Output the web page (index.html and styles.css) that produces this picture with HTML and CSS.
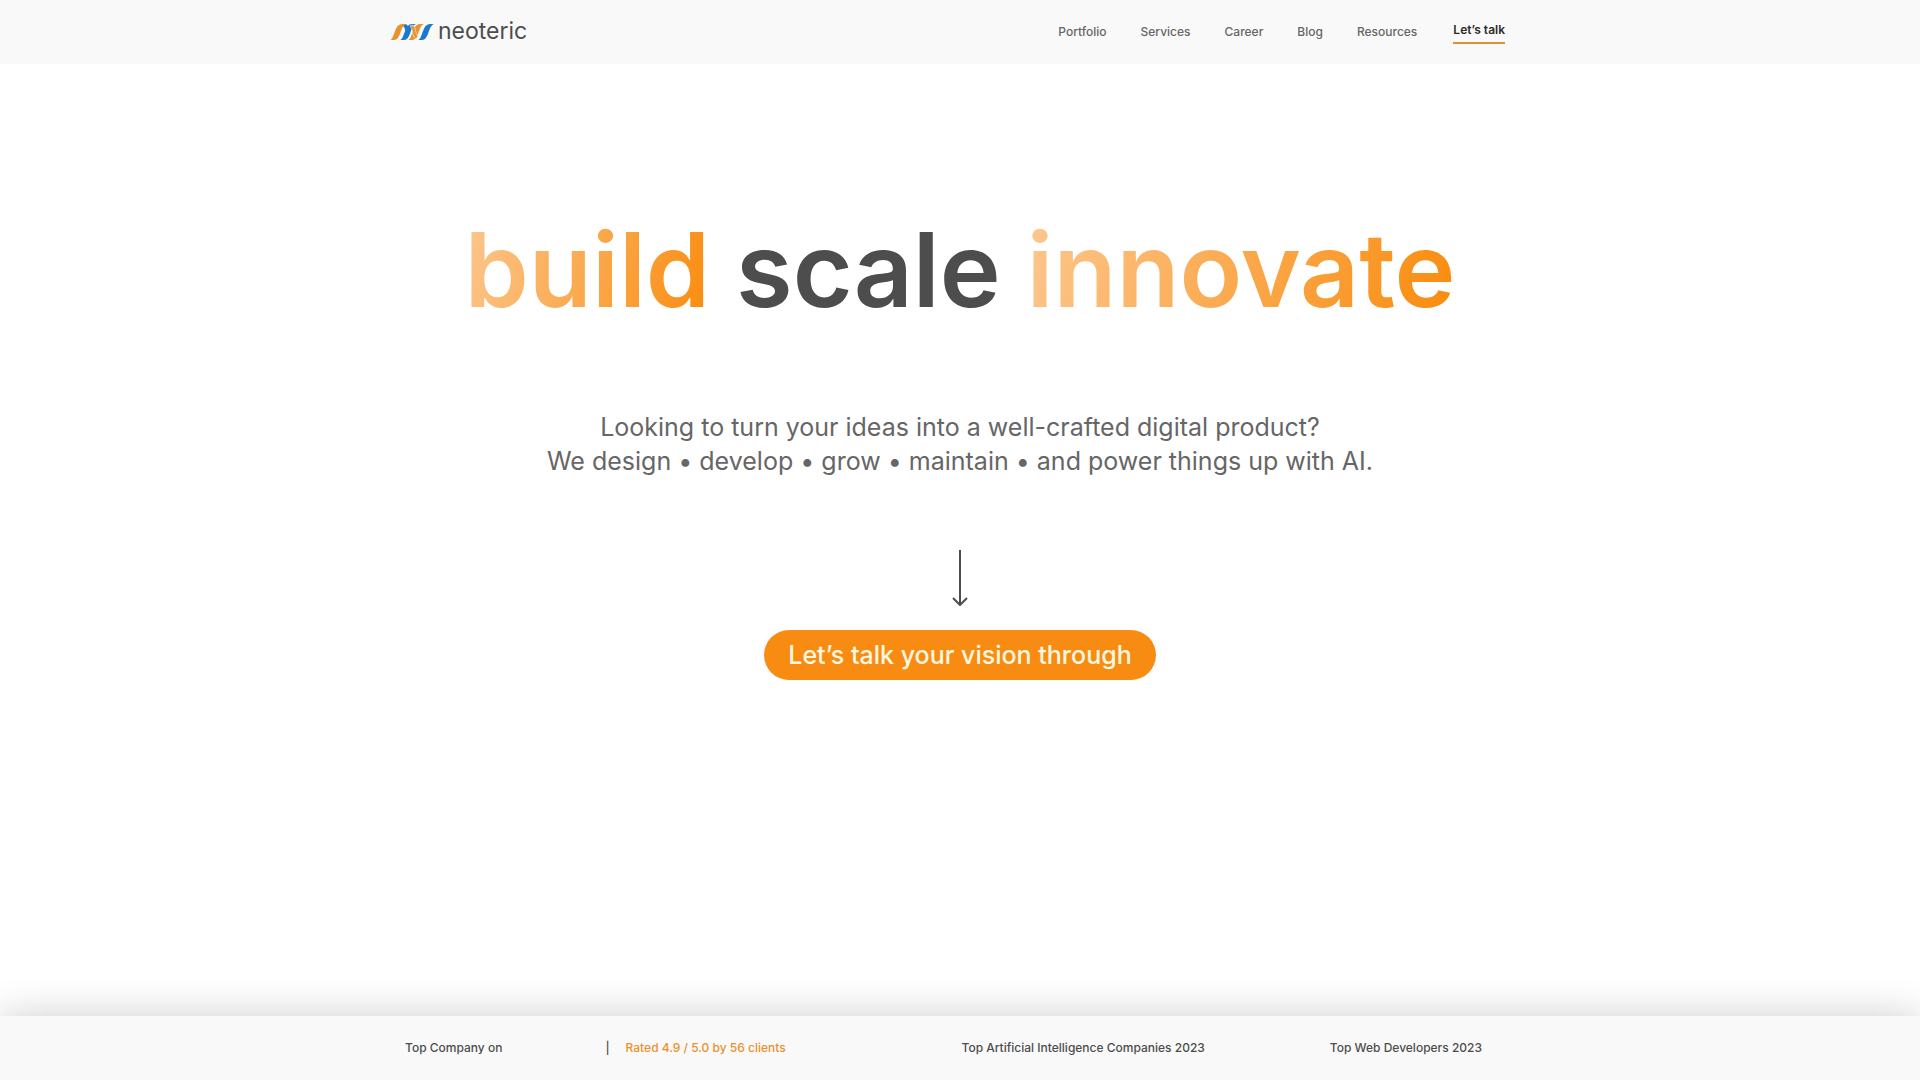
FILE: index.html
```html
<!DOCTYPE html>
<html lang="en">
<head>
  <meta charset="utf-8">
  <meta name="viewport" content="width=device-width, initial-scale=1">
  <title>Neoteric</title>
  <link rel="stylesheet" href="styles.css">
</head>
<body>
  <header class="site-header">
    <div class="container header-row">
      <a class="logo" href="#">
        <svg class="logo-mark" viewBox="0 0 44 16" aria-hidden="true">
          <path fill="#1a78d0" d="M14 0C18 0 19 3 19 7L18 12C15 10 16 4 13 2Z"/>
          <path fill="#e8912d" d="M0 16C5 15 4 0 12 0H16C10 2 11 16 4 16Z"/>
          <path fill="#1a78d0" d="M10 16C15 15 14 0 22 0H26C20 2 21 16 14 16Z"/>
          <path fill="#e8912d" d="M18 16C23 15 22 0 30 0H34C28 2 29 16 22 16Z"/>
          <path fill="#e8912d" stroke="#f9f9f9" stroke-width=".6" d="M20 2C23 4 22 13 26 15L28 12C25 10 26 3 23 1Z"/>
          <path fill="#1a78d0" d="M28 16C33 15 32 0 40 0H44C38 2 39 16 32 16Z"/>
        </svg>
        <span class="logo-name">neoteric</span>
      </a>
      <nav class="main-nav" aria-label="Main">
        <a href="#">Portfolio</a>
        <a href="#">Services</a>
        <a href="#">Career</a>
        <a href="#">Blog</a>
        <a href="#">Resources</a>
        <a class="nav-cta" href="#">Let’s talk</a>
      </nav>
    </div>
  </header>

  <main class="hero">
    <h1 class="hero-title"><span class="gradient">build</span> scale <span class="gradient">innovate</span></h1>
    <p class="hero-text">Looking to turn your ideas into a well-crafted digital product?<br>We design • develop • grow • maintain • and power things up with AI.</p>
    <svg class="hero-arrow" viewBox="0 0 16 56" aria-hidden="true">
      <path d="M8 0V55M1 48L8 55L15 48"/>
    </svg>
    <button class="hero-button" type="button">Let’s talk your vision through</button>
  </main>

  <footer class="awards">
    <div class="container awards-row">
      <div class="award rating">
        <span>Top Company on</span>
        <span class="divider">|</span>
        <a class="rated" href="#">Rated 4.9 / 5.0 by 56 clients</a>
      </div>
      <div class="award">Top Artificial Intelligence Companies 2023</div>
      <div class="award">Top Web Developers 2023</div>
    </div>
  </footer>
</body>
</html>
```
FILE: styles.css
```css
* {
  box-sizing: border-box;
}

body {
  display: flex;
  flex-direction: column;
  min-height: 100vh;
  margin: 0;
  background: #fff;
  color: #4d4d4d;
  font-family: Inter, "Open Sans", sans-serif;
  font-size: 12px;
  line-height: 16px;
}

a {
  color: inherit;
  text-decoration: none;
}

.container {
  width: 100%;
  max-width: 1140px;
  margin: 0 auto;
}

.site-header {
  background: #f9f9f9;
}

.header-row {
  display: flex;
  align-items: center;
  justify-content: space-between;
  min-height: 64px;
  padding-right: 25px;
}

.logo {
  display: flex;
  align-items: center;
  gap: 4px;
}

.logo-mark {
  width: 44px;
  height: 16px;
}

.logo-name {
  padding-bottom: 2px;
  font-size: 23px;
  line-height: 24px;
}

.main-nav {
  display: flex;
  align-items: center;
  gap: 34px;
  color: #666;
  font-weight: 500;
}

.nav-cta {
  margin: 2px 0 0 2px;
  padding-bottom: 4px;
  border-bottom: 2px solid #e08f32;
  color: #2b2b2b;
  font-weight: 600;
}

.hero {
  display: flex;
  flex: 1;
  flex-direction: column;
  align-items: center;
  padding: 142px 24px;
  text-align: center;
}

.hero-title {
  margin: 0 0 76px;
  font-size: 103px;
  font-weight: 600;
  line-height: 128px;
}

.gradient {
  background: linear-gradient(105deg, #fcc78f, #f98b0c);
  background-clip: text;
  -webkit-background-clip: text;
  color: transparent;
}

.hero-text {
  margin: 0 0 72px;
  color: #666;
  font-size: 25px;
  line-height: 34px;
}

.hero-arrow {
  width: 16px;
  height: 56px;
  margin-bottom: 24px;
  fill: none;
  stroke: #4d4d4d;
  stroke-width: 2;
}

.hero-button {
  padding: 8px 24px;
  border: 0;
  border-radius: 25px;
  background: #f88c12;
  color: #fff8e0;
  font: inherit;
  font-size: 25px;
  font-weight: 500;
  line-height: 34px;
}

.awards {
  position: sticky;
  bottom: 0;
  background: #f9f9f9;
  box-shadow: 0 0 40px rgba(0, 0, 0, 0.2);
}

.awards-row {
  display: grid;
  grid-template-columns: 556fr 368fr 200fr;
  align-items: center;
  min-height: 64px;
  padding-left: 15px;
  font-weight: 500;
}

.rating {
  display: flex;
}

.divider {
  margin: 0 16px 0 103px;
}

.rated {
  color: #e8922d;
}
```
